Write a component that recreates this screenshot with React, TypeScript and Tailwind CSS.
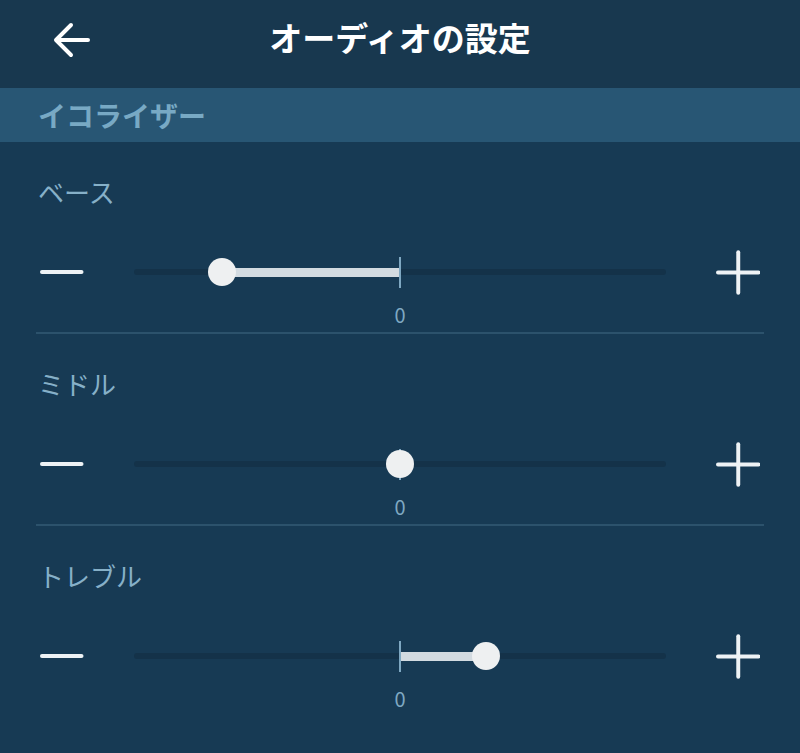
import React from 'react';

const font = { fontFamily: '"Noto Sans CJK JP", "Noto Sans", sans-serif' };

interface BandProps {
  label: string;
  // position of the thumb on the track, 0..1 (0.5 = zero)
  pos: number;
  value: number;
  last?: boolean;
}

function Slider({ pos }: { pos: number }) {
  const w = 532;
  const x = pos * w;
  const left = Math.min(x, w / 2);
  const width = Math.abs(x - w / 2);
  return (
    <div className="relative flex h-12 w-[532px] items-center">
      <div className="absolute inset-x-0 h-[6px] rounded-full bg-[#143249]" />
      <div className="absolute h-[9px] bg-[#d3dbe1]" style={{ left, width }} />
      <div className="absolute left-[265px] h-[31px] w-[2px] bg-[#7fa8c2]" />
      <div
        className="absolute h-[28px] w-[28px] -translate-x-1/2 rounded-full bg-[#eef0f1]"
        style={{ left: x }}
      />
    </div>
  );
}

function Band({ label, pos, value, last }: BandProps) {
  return (
    <section className="pt-[32px]">
      <div className="h-9 px-[38px] text-[26px] leading-9 text-[#86b0c8]">{label}</div>
      <div className="mt-[38px] flex items-center px-[40px]">
        <svg width="44" height="8" viewBox="0 0 44 8">
          <line x1="2" y1="4" x2="42" y2="4" stroke="#eef2f5" strokeWidth="4" strokeLinecap="round" />
        </svg>
        <div className="ml-[50px]">
          <Slider pos={pos} />
        </div>
        <svg className="ml-[50px]" width="45" height="45" viewBox="0 0 45 45">
          <line x1="2" y1="22.5" x2="43" y2="22.5" stroke="#eef2f5" strokeWidth="4" strokeLinecap="round" />
          <line x1="22.5" y1="2" x2="22.5" y2="43" stroke="#eef2f5" strokeWidth="4" strokeLinecap="round" />
        </svg>
      </div>
      <div className="mt-[7px] h-6 text-center text-[20px] leading-6 text-[#7fa8c2]">{value}</div>
      {!last && <div className="mx-9 mt-[5px] h-[2px] bg-[#2c526c]" />}
    </section>
  );
}

export default function App() {
  return (
    <div className="h-[753px] w-[800px] overflow-hidden bg-[#173a54]" style={font}>
      <header className="relative flex h-[88px] items-center justify-center bg-[#18384f] pb-[12px]">
        <button className="absolute left-[53px] top-[22px]">
          <svg width="37" height="36" viewBox="0 0 37 36" fill="none">
            <path d="M35 18H4M18 3L3 18l15 15" stroke="#ffffff" strokeWidth="4" strokeLinecap="round" strokeLinejoin="round" />
          </svg>
        </button>
        <h1 className="text-[33px] font-bold text-white">オーディオの設定</h1>
      </header>
      <div className="flex h-[54px] items-center bg-[#285674] px-[38px]">
        <span className="text-[28px] font-bold text-[#78a9c4]">イコライザー</span>
      </div>
      <Band label="ベース" pos={0.167} value={0} />
      <Band label="ミドル" pos={0.5} value={0} />
      <Band label="トレブル" pos={0.663} value={0} last />
    </div>
  );
}
